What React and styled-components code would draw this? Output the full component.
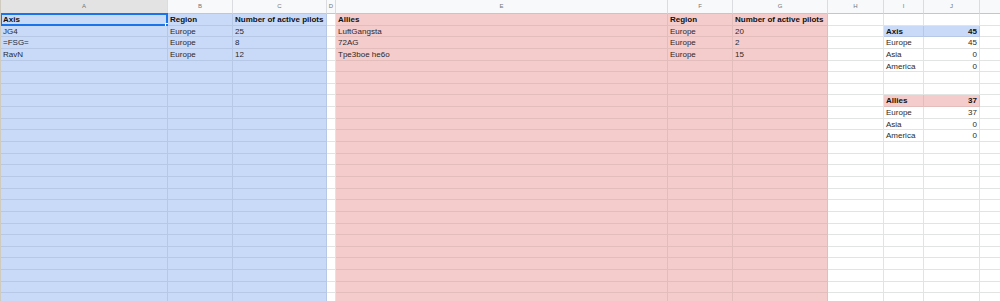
import React from 'react';
import styled, { createGlobalStyle, css } from 'styled-components';

const GlobalStyle = createGlobalStyle`
  html, body {
    margin: 0;
    padding: 0;
    background: #ffffff;
    overflow: hidden;
  }
  body {
    font-family: "Liberation Sans", Arial, sans-serif;
  }
`;

const FILLS = {
  none: { bg: '#ffffff', line: '#e2e3e3' },
  blue: { bg: '#c9daf8', line: '#b6c8e6' },
  red: { bg: '#f4cccc', line: '#e3bcbc' },
};

// K runs past the right edge, so its letter is not shown
const COLUMNS = [
  { key: 'A', width: 167, fill: 'blue' },
  { key: 'B', width: 65, fill: 'blue' },
  { key: 'C', width: 94, fill: 'blue' },
  { key: 'D', width: 9, fill: 'none' },
  { key: 'E', width: 332, fill: 'red' },
  { key: 'F', width: 65, fill: 'red' },
  { key: 'G', width: 95, fill: 'red' },
  { key: 'H', width: 56, fill: 'none' },
  { key: 'I', width: 40, fill: 'none' },
  { key: 'J', width: 56, fill: 'none' },
  { key: 'K', width: 80, fill: 'none', hidden: true },
];

const ROW_COUNT = 25;

const b = (v) => ({ v, bold: true });

const DATA = {
  1: { A: b('Axis'), B: b('Region'), C: b('Number of active pilots'), E: b('Allies'), F: b('Region'), G: b('Number of active pilots') },
  2: { A: 'JG4', B: 'Europe', C: '25', E: 'LuftGangsta', F: 'Europe', G: '20', I: b('Axis'), J: { v: '45', bold: true, right: true } },
  3: { A: '=FSG=', B: 'Europe', C: '8', E: '72AG', F: 'Europe', G: '2', I: 'Europe', J: { v: '45', right: true } },
  4: { A: 'RavN', B: 'Europe', C: '12', E: 'Tpe3boe he6o', F: 'Europe', G: '15', I: 'Asia', J: { v: '0', right: true } },
  5: { I: 'America', J: { v: '0', right: true } },
  8: { I: b('Allies'), J: { v: '37', bold: true, right: true } },
  9: { I: 'Europe', J: { v: '37', right: true } },
  10: { I: 'Asia', J: { v: '0', right: true } },
  11: { I: 'America', J: { v: '0', right: true } },
};

// summary cells painted on their own
const CELL_FILLS = {
  '2I': 'blue', '2J': 'blue',
  '8I': 'red', '8J': 'red',
};

const Sheet = styled.div`
  display: grid;
  grid-template-columns: ${COLUMNS.map((c) => `${c.width}px`).join(' ')};
  grid-template-rows: 14px;
  grid-auto-rows: 11.65px;
  width: 1000px;
  height: 301px;
  overflow: hidden;
  border-left: 1px solid #cfcbbf;
  box-sizing: border-box;
`;

const ColHeader = styled.div`
  box-sizing: border-box;
  background: ${({ $active }) => ($active ? '#e3e3e3' : '#f8f9fa')};
  border-right: 1px solid #dadce0;
  border-bottom: 1px solid #c4c7c5;
  color: #70757a;
  font-size: 6px;
  line-height: 13px;
  text-align: center;
`;

const Cell = styled.div`
  position: relative;
  box-sizing: border-box;
  padding: 0 3px 0 2px;
  white-space: nowrap;
  overflow: visible;
  font-size: 8px;
  line-height: 11px;
  color: #2a2a2a;
  background: ${({ $fill }) => FILLS[$fill].bg};
  border-right: 1px solid ${({ $fill }) => FILLS[$fill].line};
  border-bottom: 1px solid ${({ $fill }) => FILLS[$fill].line};
  text-align: ${({ $right }) => ($right ? 'right' : 'left')};
  ${({ $right }) => $right && css`padding-right: 2px;`}
  ${({ $bold }) =>
    $bold &&
    css`
      font-weight: bold;
      color: #111111;
    `}
`;

const Selection = styled.div`
  position: absolute;
  left: -1px;
  top: -1px;
  right: -1px;
  bottom: -1px;
  border: 2px solid #1a73e8;
  pointer-events: none;
`;

const Handle = styled.div`
  position: absolute;
  right: -3px;
  bottom: -3px;
  width: 4px;
  height: 4px;
  background: #1a73e8;
  border: 1px solid #ffffff;
  box-sizing: border-box;
`;

const readCell = (raw) => {
  if (raw == null) return { v: '' };
  if (typeof raw === 'string') return { v: raw };
  return raw;
};

export default function App() {
  const rows = Array.from({ length: ROW_COUNT }, (_, i) => i + 1);

  return (
    <>
      <GlobalStyle />
      <Sheet>
        {COLUMNS.map((col) => (
          <ColHeader key={col.key} $active={col.key === 'A'}>
            {col.hidden ? '' : col.key}
          </ColHeader>
        ))}
        {rows.map((r) =>
          COLUMNS.map((col) => {
            const cell = readCell(DATA[r]?.[col.key]);
            const fill = CELL_FILLS[`${r}${col.key}`] || col.fill;
            const selected = r === 1 && col.key === 'A';
            return (
              <Cell
                key={`${r}${col.key}`}
                $fill={fill}
                $bold={cell.bold}
                $right={cell.right}
              >
                {cell.v}
                {selected && (
                  <Selection>
                    <Handle />
                  </Selection>
                )}
              </Cell>
            );
          }),
        )}
      </Sheet>
    </>
  );
}
